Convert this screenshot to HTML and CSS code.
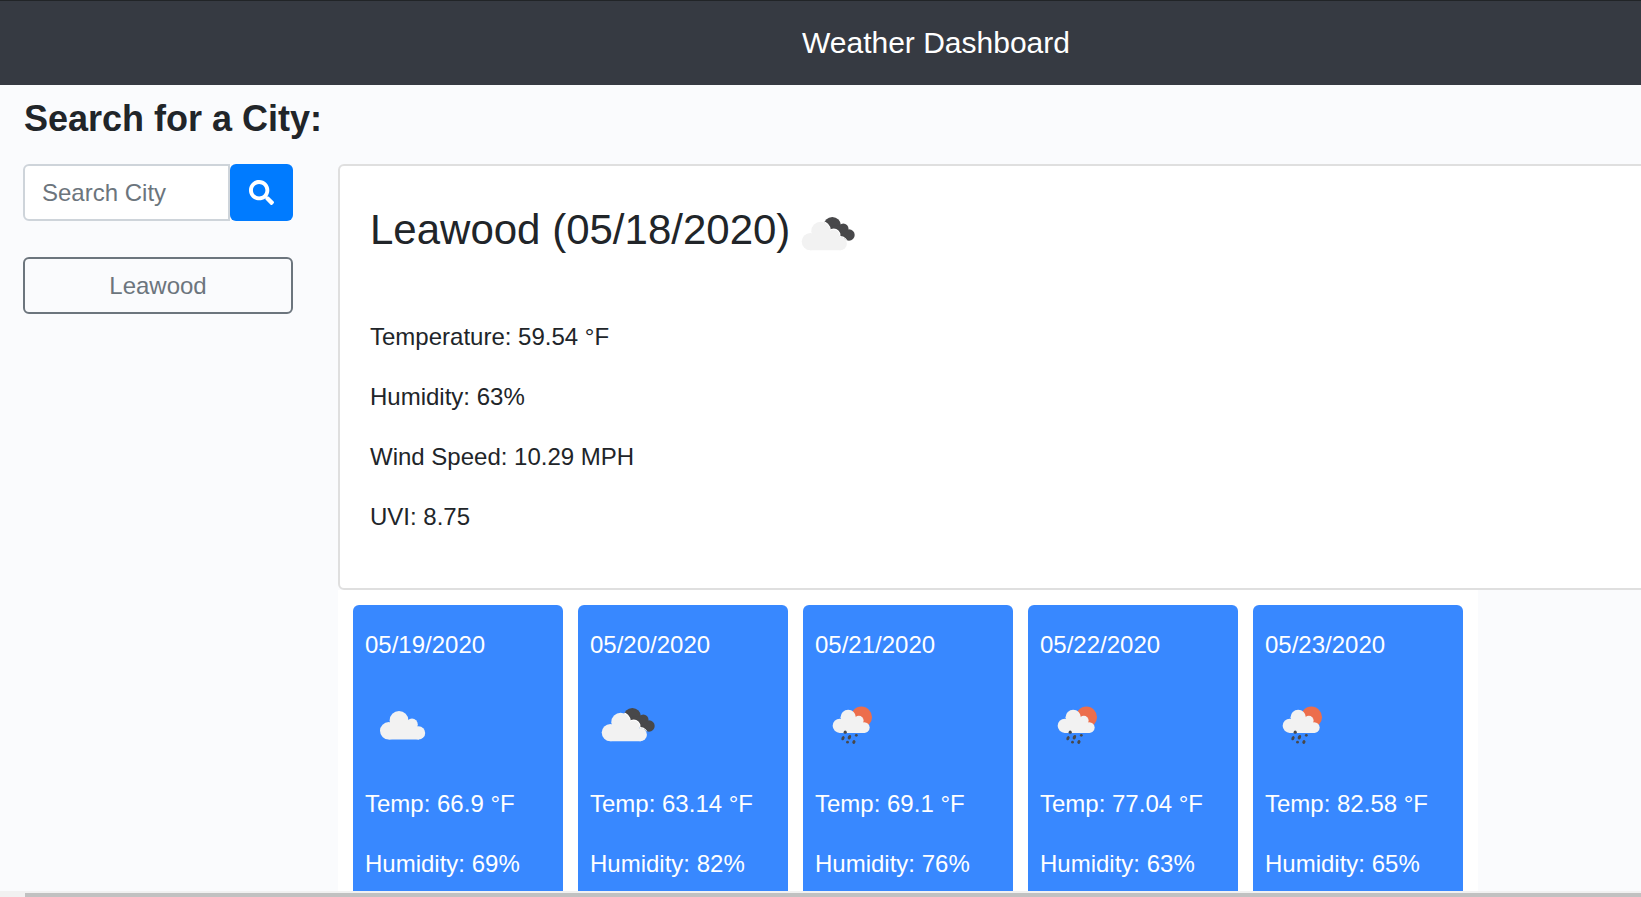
FILE: index.html
```html
<!DOCTYPE html>
<html lang="en">
<head>
<meta charset="utf-8">
<title>Weather Dashboard</title>
<link rel="stylesheet" href="styles.css">
</head>
<body>
<svg class="symbols" aria-hidden="true">
  <defs>
    <g id="cloud">
      <circle cx="23.7" cy="43.8" r="8.7"/>
      <circle cx="34" cy="33.4" r="9.4"/>
      <circle cx="47" cy="37.4" r="5.8"/>
      <circle cx="53.6" cy="45.9" r="6.6"/>
      <path d="M26 36h25l3 8v8.500H23.700z"/>
    </g>
    <g id="dark-shape">
      <circle cx="42.300" cy="29.700" r="8.700"/>
      <circle cx="53.300" cy="32.800" r="5.200"/>
      <circle cx="59" cy="39" r="5.700"/>
      <path d="M42 30l8-1 8 6-2 8-6-2z"/>
    </g>
    <clipPath id="dark-clip">
      <circle cx="42.300" cy="29.700" r="8.700"/>
      <circle cx="53.300" cy="32.800" r="5.200"/>
      <circle cx="59" cy="39" r="5.700"/>
      <path d="M42 30l8-1 8 6-2 8-6-2z"/>
    </clipPath>
  </defs>
  <symbol id="scattered" viewBox="0 0 75 75">
    <use href="#cloud" class="cloud"/>
  </symbol>
  <symbol id="broken" viewBox="0 0 75 75">
    <use href="#dark-shape" class="dark"/>
    <g clip-path="url(#dark-clip)"><use href="#cloud" class="rim" x="-3.300" y="1.800"/></g>
    <use href="#cloud" class="cloud" x="-3.300" y="1.800"/>
  </symbol>
  <symbol id="rain" viewBox="0 0 75 75">
    <circle cx="46.400" cy="30.200" r="10.600" class="sun"/>
    <use href="#cloud" class="cloud" transform="translate(5.400 3) scale(.818)"/>
    <g class="drops">
      <circle cx="30.200" cy="45.200" r="1.600"/>
      <ellipse cx="28" cy="51.200" rx="1.500" ry="2.200" transform="rotate(25 28 51.200)"/>
      <ellipse cx="34.400" cy="50.200" rx="1.600" ry="2.300" transform="rotate(25 34.400 50.200)"/>
      <circle cx="41.300" cy="48.300" r="1.400"/>
      <circle cx="32.500" cy="55.200" r="1.400"/>
      <ellipse cx="38.900" cy="55" rx="1.500" ry="2" transform="rotate(25 38.900 55)"/>
    </g>
  </symbol>
</svg>

<div class="page">
  <header class="navbar"><h1 class="brand">Weather Dashboard</h1></header>
  <main class="content">
    <h2 class="heading">Search for a City:</h2>
    <div class="columns">
      <aside class="sidebar">
        <form class="search">
          <input class="search-input" type="text" placeholder="Search City">
          <button class="search-button" type="button" aria-label="Search">
            <svg class="search-icon" viewBox="0 0 512 512"><path fill="currentColor" d="M505 442.700L405.300 343c-4.500-4.500-10.600-7-17-7H372c27.600-35.300 44-79.700 44-128C416 93.100 322.900 0 208 0S0 93.100 0 208s93.100 208 208 208c48.300 0 92.700-16.400 128-44v16.300c0 6.400 2.500 12.500 7 17l99.700 99.700c9.400 9.400 24.600 9.400 33.900 0l28.300-28.300c9.400-9.400 9.400-24.600.1-34zM208 336c-70.700 0-128-57.200-128-128 0-70.700 57.200-128 128-128 70.700 0 128 57.200 128 128 0 70.700-57.200 128-128 128z"/></svg>
          </button>
        </form>
        <button class="city" type="button">Leawood</button>
      </aside>
      <section class="results">
        <article class="current">
          <h3 class="current-title">Leawood (05/18/2020)<svg class="weather-icon"><use href="#broken"/></svg></h3>
          <p>Temperature: 59.54 °F</p>
          <p>Humidity: 63%</p>
          <p>Wind Speed: 10.29 MPH</p>
          <p>UVI: 8.75</p>
        </article>
        <div class="forecast">
          <article class="day"><p>05/19/2020</p><svg class="weather-icon"><use href="#scattered"/></svg><p>Temp: 66.9 °F</p><p>Humidity: 69%</p></article>
          <article class="day"><p>05/20/2020</p><svg class="weather-icon"><use href="#broken"/></svg><p>Temp: 63.14 °F</p><p>Humidity: 82%</p></article>
          <article class="day"><p>05/21/2020</p><svg class="weather-icon"><use href="#rain"/></svg><p>Temp: 69.1 °F</p><p>Humidity: 76%</p></article>
          <article class="day"><p>05/22/2020</p><svg class="weather-icon"><use href="#rain"/></svg><p>Temp: 77.04 °F</p><p>Humidity: 63%</p></article>
          <article class="day"><p>05/23/2020</p><svg class="weather-icon"><use href="#rain"/></svg><p>Temp: 82.58 °F</p><p>Humidity: 65%</p></article>
        </div>
      </section>
    </div>
  </main>
  <div class="scrollbar"><div class="scrollbar-thumb"></div></div>
</div>
</body>
</html>
```
FILE: styles.css
```css
* { box-sizing: border-box; }
body {
  margin: 0;
  overflow: hidden;
  color: #212529;
  background: #fafbfd;
  font: 24px/36px "Liberation Sans", Arial, sans-serif;
}
h1, h2, h3, p { margin: 0; }
.symbols { display: block; width: 0; height: 0; }
.page { display: flex; flex-direction: column; height: 897px; overflow: hidden; }

.navbar {
  flex: none;
  height: 85px;
  padding: 20px 0 0 802px;
  border-top: 1px solid #212427;
  background: #363a42;
}
.brand { color: #fff; font-size: 30px; font-weight: 400; line-height: 44px; }

.content { flex: 1; min-height: 0; padding: 12px 0 0 23px; overflow: hidden; }
.heading { padding-left: 1px; font-size: 36px; font-weight: 700; line-height: 43px; }
.columns { display: flex; gap: 45px; margin-top: 24px; }
.sidebar { flex: none; width: 270px; }
.search { display: flex; height: 57px; margin: 0 0 36px; }
.search-input {
  width: 207px;
  padding: 0 17px;
  border: 2px solid #ced4da;
  border-radius: 6px 0 0 6px;
  color: #495057;
  background: #fff;
  font: inherit;
}
.search-input::placeholder { color: #6c757d; opacity: 1; }
.search-button {
  display: flex;
  align-items: center;
  justify-content: center;
  width: 63px;
  padding: 0;
  border: 0;
  border-radius: 6px;
  color: #fff;
  background: #007bff;
}
.search-icon { width: 25px; height: 25px; }
.city {
  display: block;
  width: 100%;
  height: 57px;
  padding: 0;
  border: 2px solid #6c757d;
  border-radius: 6px;
  color: #6c757d;
  background: transparent;
  font: inherit;
}

.results { flex: none; width: 1400px; }
.current {
  height: 426px;
  padding: 30px;
  border: 2px solid #dfdfdf;
  border-radius: 6px;
  background: #fff;
}
.current-title {
  display: flex;
  height: 123px;
  font-size: 42px;
  font-weight: 400;
  line-height: 68px;
}
.current p { margin-bottom: 24px; }
.weather-icon { display: block; flex: none; width: 75px; height: 75px; }
.forecast {
  display: flex;
  gap: 15px;
  width: 1140px;
  padding: 15px;
  background: #fff;
}
.day {
  width: 210px;
  height: 310px;
  padding: 22px 12px;
  border-radius: 6px;
  color: #fff;
  background: #3888ff;
}
.day p { margin-bottom: 24px; white-space: nowrap; }
.day .weather-icon { margin-bottom: 24px; }

.cloud { fill: #f2f2f2; }
.dark { fill: #48484a; }
.rim { fill: #fff; stroke: #fff; stroke-width: 2; }
.sun { fill: #ec6e4c; }
.drops { fill: #48484a; }

.scrollbar { flex: none; height: 6px; padding: 2px 0 0 25px; background: #f1f1f1; }
.scrollbar-thumb { height: 4px; background: #c1c1c1; }
```
